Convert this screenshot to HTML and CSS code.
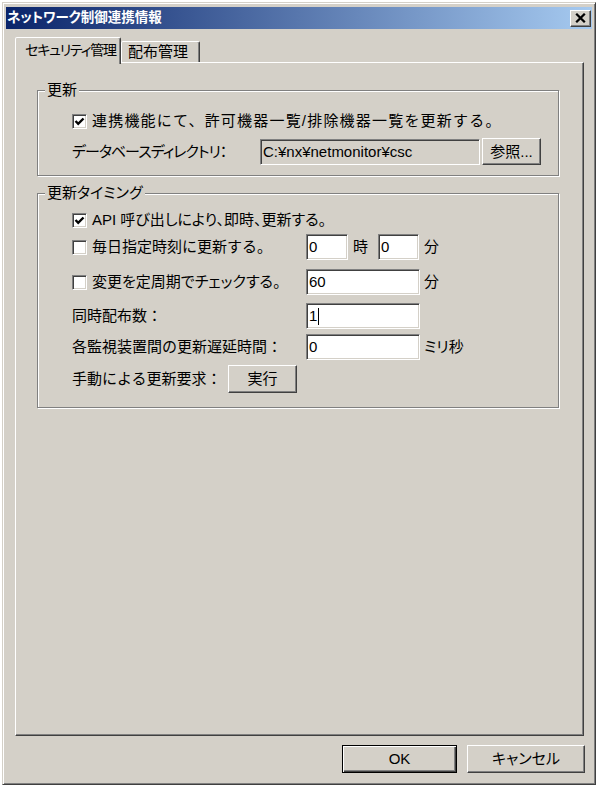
FILE: index.html
```html
<!DOCTYPE html>
<html lang="ja">
<head>
<meta charset="utf-8">
<title>ネットワーク制御連携情報</title>
<link rel="stylesheet" href="styles.css">
</head>
<body>
<div class="window">
  <div class="titlebar">
    <span class="title kana">ネットワーク制御連携情報</span>
    <div class="close">
      <svg width="11" height="10" viewBox="0 0 11 10"><path d="M1.2 0.8 L9.8 9.2 M9.8 0.8 L1.2 9.2" stroke="#000" stroke-width="2.3" fill="none"/></svg>
    </div>
  </div>
  <div class="tabs">
    <div class="tab active"><span class="tab-text kana">セキュリティ管理</span></div>
    <div class="tab"><span>配布管理</span></div>
  </div>
  <div class="panel">
    <fieldset class="group g-update">
      <legend>更新</legend>
      <div class="group-body body-update">
        <div class="row row-check">
          <span class="cb"><svg width="11" height="11" viewBox="0 0 11 11"><path d="M1.5 5 L4.2 7.8 L9.5 2.5" stroke="#000" stroke-width="2.4" fill="none"/></svg></span>
          <span class="wide">連携機能にて、許可機器一覧/排除機器一覧を更新する。</span>
        </div>
        <div class="row row-dir">
          <span class="lbl-dir kana">データベースディレクトリ：</span>
          <div class="field ro w-path">C:¥nx¥netmonitor¥csc</div>
          <div class="btn btn-browse">参照...</div>
        </div>
      </div>
    </fieldset>
    <fieldset class="group g-timing">
      <legend class="kana">更新タイミング</legend>
      <div class="group-body body-timing">
        <div class="row row-api">
          <span class="cb"><svg width="11" height="11" viewBox="0 0 11 11"><path d="M1.5 5 L4.2 7.8 L9.5 2.5" stroke="#000" stroke-width="2.4" fill="none"/></svg></span>
          <span class="kana">API 呼び出しにより、即時、更新する。</span>
        </div>
        <div class="row row-daily">
          <div class="lead"><span class="cb"></span><span>毎日指定時刻に更新する。</span></div>
          <div class="field w-hour">0</div>
          <span class="unit unit-hour">時</span>
          <div class="field w-min">0</div>
          <span class="unit">分</span>
        </div>
        <div class="row row-period">
          <div class="lead"><span class="cb"></span><span class="kana">変更を定周期でチェックする。</span></div>
          <div class="field w-long">60</div>
          <span class="unit unit-tight">分</span>
        </div>
        <div class="row row-count">
          <div class="lead"><span>同時配布数：</span></div>
          <div class="field w-long">1<span class="caret"></span></div>
        </div>
        <div class="row row-delay">
          <div class="lead"><span>各監視装置間の更新遅延時間：</span></div>
          <div class="field w-long">0</div>
          <span class="unit unit-tight kana">ミリ秒</span>
        </div>
        <div class="row row-manual">
          <span class="lbl-manual">手動による更新要求：</span>
          <div class="btn btn-run">実行</div>
        </div>
      </div>
    </fieldset>
  </div>
  <div class="footer">
    <div class="btn btn-default">OK</div>
    <div class="btn btn-cancel kana">キャンセル</div>
  </div>
</div>
</body>
</html>
```
FILE: styles.css
```css
* { box-sizing: border-box; }
html, body { margin: 0; padding: 0; }
body {
  background: #fff;
  color: #000;
  font: 15px/18px "Liberation Sans", "Noto Sans CJK JP", sans-serif;
}
.kana { font-feature-settings: "palt"; }
.wide { letter-spacing: 1.2px; }

.window {
  margin: 2px 0 0 2px;
  width: 594px;
  height: 783px;
  background: #d4d0c8;
  border: 1px solid;
  border-color: #d4d0c8 #404040 #404040 #d4d0c8;
  box-shadow: inset 1px 1px #fff, inset -1px -1px #808080;
  padding: 4px 3px 3px 3px;
  display: flex;
  flex-direction: column;
}

.titlebar {
  height: 22px;
  flex: none;
  background: linear-gradient(to right, #0a246a, #a6caf0);
  display: flex;
  align-items: center;
  justify-content: space-between;
  padding: 0 1px 0 1px;
}
.title {
  color: #fff;
  font-size: 13.5px;
  font-weight: bold;
  line-height: 18px;
}
.close {
  width: 21px;
  height: 17px;
  background: #d4d0c8;
  border: 1px solid;
  border-color: #fff #404040 #404040 #fff;
  box-shadow: inset -1px -1px #808080;
  display: flex;
  align-items: center;
  justify-content: center;
}

.tabs {
  margin-top: 8px;
  padding-left: 9px;
  height: 25px;
  flex: none;
  display: flex;
  align-items: flex-end;
}
.tab {
  height: 21px;
  width: 79px;
  background: #d4d0c8;
  border: 1px solid;
  border-bottom: none;
  border-color: #fff #404040 transparent #fff;
  box-shadow: inset -1px 0 #808080;
  border-radius: 2px 2px 0 0;
  padding: 1px 0 0 6px;
  font-size: 15px;
  line-height: 18px;
  white-space: nowrap;
  overflow: hidden;
}
.tab.active {
  width: 106px;
  height: 27px;
  margin-bottom: -2px;
  padding: 3px 0 0 9px;
  position: relative;
  z-index: 1;
}
.tab-text { font-size: 14px; letter-spacing: -1.2px; }

.panel {
  margin-left: 9px;
  width: 569px;
  height: 674px;
  flex: none;
  border: 1px solid;
  border-color: #fff #404040 #404040 #fff;
  box-shadow: inset -1px -1px #808080;
  padding: 18px 24px 0 21px;
}

.group {
  margin: 0;
  padding: 0;
  min-width: 0;
  border: 1px solid #808080;
  box-shadow: inset 1px 1px #fff, 1px 1px #fff;
}
.group legend {
  margin-left: 7px;
  padding: 0 2px;
  background: #d4d0c8;
  line-height: 18px;
}
.g-timing { margin-top: 8px; }

.group-body {
  padding: 0 0 10px 34px;
  display: flex;
  flex-direction: column;
}
.body-timing { padding-bottom: 14px; }

.row {
  display: flex;
  align-items: center;
  white-space: nowrap;
}
.row-check { height: 20px; margin-top: 12px; gap: 5px; }
.row-dir { height: 27px; margin-top: 7px; }
.row-api { height: 20px; margin-top: 8px; gap: 5px; }
.row-daily { height: 26px; margin-top: 4px; }
.row-period { height: 26px; margin-top: 9px; }
.row-count { height: 26px; margin-top: 8px; }
.row-delay { height: 26px; margin-top: 5px; }
.row-manual { height: 28px; margin-top: 5px; }

.lead {
  width: 234px;
  flex: none;
  display: flex;
  align-items: center;
  gap: 5px;
}
.lbl-dir { width: 188px; flex: none; letter-spacing: -1px; }
.lbl-manual { width: 156px; flex: none; }

.cb {
  width: 15px;
  height: 15px;
  flex: none;
  background: #fff;
  border: 1px solid;
  border-color: #808080 #fff #fff #808080;
  box-shadow: inset 1px 1px #404040, inset -1px -1px #d4d0c8;
  display: flex;
  align-items: center;
  justify-content: center;
}

.field {
  height: 26px;
  flex: none;
  background: #fff;
  border: 1px solid;
  border-color: #808080 #fff #fff #808080;
  box-shadow: inset 1px 1px #404040, inset -1px -1px #d4d0c8;
  padding: 0 2px;
  line-height: 24px;
  white-space: nowrap;
  display: flex;
  align-items: center;
}
.field.ro { background: #d4d0c8; }
.w-path { width: 220px; }
.w-hour { width: 42px; }
.w-min { width: 41px; }
.w-long { width: 114px; }
.caret {
  width: 1px;
  height: 17px;
  background: #000;
  margin-left: 1px;
}

.unit { margin-left: 5px; }
.unit-hour { margin-right: 10px; }
.unit-tight { margin-left: 4px; }

.btn {
  display: flex;
  align-items: center;
  justify-content: center;
  flex: none;
  background: #d4d0c8;
  border: 1px solid;
  border-color: #fff #404040 #404040 #fff;
  box-shadow: inset -1px -1px #808080;
}
.btn-browse { width: 59px; height: 27px; margin-left: 2px; }
.btn-run { width: 69px; height: 28px; }

.footer {
  margin-top: 9px;
  padding-right: 7px;
  display: flex;
  justify-content: flex-end;
  gap: 10px;
}
.btn-default {
  width: 115px;
  height: 28px;
  border-color: #000;
  box-shadow: inset 1px 1px #fff, inset -1px -1px #404040, inset -2px -2px #808080;
}
.btn-cancel { width: 118px; height: 28px; }
```
